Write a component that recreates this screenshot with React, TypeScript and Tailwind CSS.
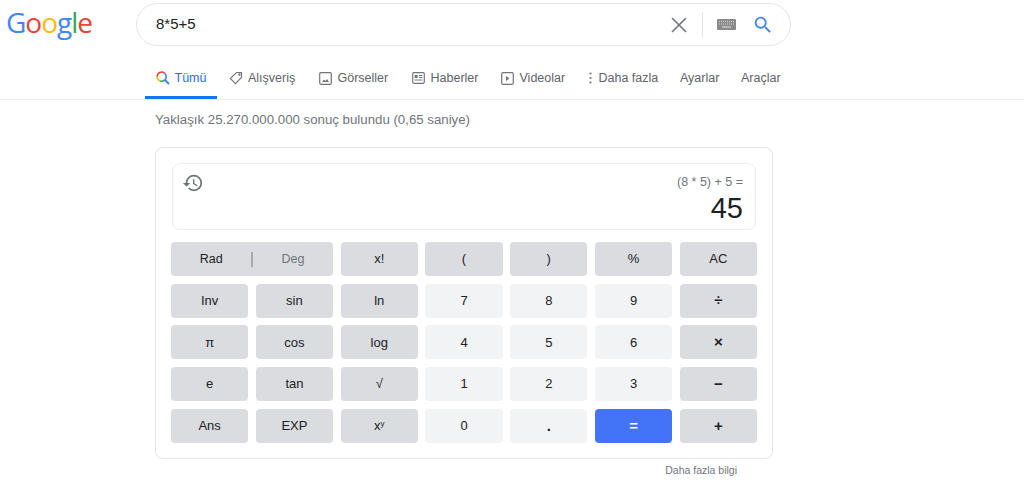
import { X } from "lucide-react";

const FONT = "font-['Liberation_Sans',Arial,sans-serif]";

const GoogleLogo = () => (
    <span className="flex text-[28px] font-medium leading-none tracking-[-1px] font-['Open_Sans',sans-serif]">
        <span className="text-[#4285f4]">G</span>
        <span className="text-[#ea4335]">o</span>
        <span className="text-[#fbbc05]">o</span>
        <span className="text-[#4285f4]">g</span>
        <span className="text-[#34a853]">l</span>
        <span className="text-[#ea4335]">e</span>
    </span>
);

const KeyboardIcon = () => (
    <svg width="19" height="11" viewBox="0 0 19 11">
        <rect width="19" height="11" rx="1" fill="#8a8a8a" />
        <path d="M2 2.5h15M2 5h15" stroke="#d8d8d8" strokeWidth="1" strokeDasharray="1 1" />
        <path d="M5 8h9" stroke="#d8d8d8" strokeWidth="1.2" />
    </svg>
);

const BlueSearch = () => (
    <svg width="22" height="22" viewBox="0 0 24 24" fill="#4285f4">
        <path d="M15.5 14h-.79l-.28-.27A6.471 6.471 0 0 0 16 9.5 6.5 6.5 0 1 0 9.5 16c1.61 0 3.09-.59 4.23-1.57l.27.28v.79l5 4.99L20.49 19l-4.99-5zm-6 0C7.01 14 5 11.99 5 9.5S7.01 5 9.5 5 14 7.01 14 9.5 11.99 14 9.5 14z" />
    </svg>
);

const HistoryIcon = () => (
    <svg width="22" height="22" viewBox="0 0 24 24" fill="#70757a">
        <path d="M13 3a9 9 0 0 0-9 9H1l3.89 3.89.07.14L9 12H6c0-3.87 3.13-7 7-7s7 3.13 7 7-3.13 7-7 7c-1.93 0-3.68-.79-4.94-2.06l-1.42 1.42A8.954 8.954 0 0 0 13 21a9 9 0 0 0 0-18zm-1 5v5l4.28 2.54.72-1.21-3.5-2.08V8H12z" />
    </svg>
);

const ColorSearch = () => (
    <svg width="14" height="14" viewBox="0 0 14 14" fill="none" strokeWidth="1.6">
        <path d="M8.5 2.1a4.5 4.5 0 0 0-7.3 3.6" stroke="#ea4335" />
        <path d="M1.2 5.7a4.5 4.5 0 0 0 3 4.2" stroke="#fbbc05" />
        <path d="M4.2 9.9a4.5 4.5 0 0 0 4.6-1" stroke="#34a853" />
        <path d="M8.5 2.1a4.5 4.5 0 0 1 .3 6.8" stroke="#4285f4" />
        <path d="M9 9l4 4" stroke="#4285f4" strokeWidth="1.9" />
    </svg>
);

const TagIcon = () => (
    <svg width="14" height="14" viewBox="0 0 14 14" fill="none" stroke="#70757a" strokeWidth="1.1">
        <path d="M7.5 1.5h5v5l-6 6.2-5.2-5.2z" />
        <circle cx="10.4" cy="3.6" r="0.7" />
    </svg>
);

const ImageIcon = () => (
    <svg width="13" height="13" viewBox="0 0 13 13" fill="none">
        <rect x="0.7" y="0.7" width="11.6" height="11.6" rx="1.2" stroke="#70757a" strokeWidth="1.2" />
        <path d="M3 10l2-2.6 1.5 1.6L8 7l2 3z" fill="#70757a" />
    </svg>
);

const NewsIcon = () => (
    <svg width="13" height="12" viewBox="0 0 13 12" fill="none">
        <rect x="0.7" y="0.7" width="11.6" height="10.6" rx="1.2" stroke="#70757a" strokeWidth="1.2" />
        <rect x="2.6" y="3" width="3" height="3" fill="#70757a" />
        <path d="M6.8 3.5h3.6M6.8 5.5h3.6M2.6 8h7.8" stroke="#70757a" />
    </svg>
);

const VideoIcon = () => (
    <svg width="13" height="13" viewBox="0 0 13 13" fill="none">
        <rect x="0.7" y="0.7" width="11.6" height="11.6" rx="1.2" stroke="#70757a" strokeWidth="1.2" />
        <path d="M5 4l3.4 2.5L5 9z" fill="#70757a" />
    </svg>
);

const DotsIcon = () => (
    <svg width="3" height="12" viewBox="0 0 3 12" fill="#70757a">
        <circle cx="1.5" cy="1.5" r="1.1" />
        <circle cx="1.5" cy="6" r="1.1" />
        <circle cx="1.5" cy="10.5" r="1.1" />
    </svg>
);

const tabs = [
    { label: "Alışveriş", icon: <TagIcon />, w: "w-[90px]", gap: "gap-[5px]" },
    { label: "Görseller", icon: <ImageIcon />, w: "w-[93px]", gap: "gap-[5.5px]" },
    { label: "Haberler", icon: <NewsIcon />, w: "w-[89px]", gap: "gap-[5.5px]" },
    { label: "Videolar", icon: <VideoIcon />, w: "w-[88px]", gap: "gap-[5.5px]" },
    { label: "Daha fazla", icon: <DotsIcon />, w: "w-[91px]", gap: "gap-[6.5px]" },
];

const Key = ({ label, kind = "fn" }: { label: React.ReactNode; kind?: "fn" | "num" | "eq" }) => {
    const colors = {
        fn: "bg-[#dadce0] text-[#202124]",
        num: "bg-[#f1f3f4] text-[#202124]",
        eq: "bg-[#4374f8] text-white",
    };
    return (
        <button className={`h-[34px] rounded text-[13px] flex items-center justify-center ${colors[kind]}`}>
            {label}
        </button>
    );
};

const Op = ({ children }: { children: React.ReactNode }) => <b className="text-[15px]">{children}</b>;

const App = () => {
    return (
        <div className={`w-[1024px] h-[490px] overflow-hidden bg-white ${FONT}`}>
            <header className="h-[100px] border-b border-[#ebebeb] flex flex-col">
                <div className="flex items-start pt-[3px] h-[56px]">
                    <div className="w-[136px] pl-[6px] pt-[5px]">
                        <GoogleLogo />
                    </div>
                    <div className="w-[655px] h-[43px] rounded-full border border-[#e4e4e4] flex items-center pl-[19px] pr-[16px]">
                        <span className="flex-1 text-[15px] text-[#202124]">8*5+5</span>
                        <X size={26} strokeWidth={1.5} className="text-[#70757a]" />
                        <div className="w-px h-[26px] bg-[#e6e6e6] ml-[10px] mr-[14px]" />
                        <KeyboardIcon />
                        <div className="ml-[16px]">
                            <BlueSearch />
                        </div>
                    </div>
                </div>
                <nav className="flex flex-1 items-stretch pl-[145px] text-[12.5px] text-[#5f6368]">
                    <div className="w-[72px] flex items-center justify-center gap-[5px] border-b-[3px] border-[#1a73e8] text-[#1a73e8] pt-[4px]">
                        <ColorSearch />
                        <span>Tümü</span>
                    </div>
                    <div className="w-[12px]" />
                    {tabs.map((tab) => (
                        <div key={tab.label} className={`${tab.w} ${tab.gap} shrink-0 flex items-center pt-px`}>
                            {tab.icon}
                            <span>{tab.label}</span>
                        </div>
                    ))}
                    <div className="w-[61px] flex items-center pt-px">Ayarlar</div>
                    <div className="flex items-center pt-px">Araçlar</div>
                </nav>
            </header>

            <main className="pl-[155px]">
                <p className="text-[13.25px] leading-[14px] text-[#70757a] pt-[13px] pb-[20px]">
                    Yaklaşık 25.270.000.000 sonuç bulundu (0,65 saniye)
                </p>
                <div className="w-[618px] h-[312px] rounded-lg border border-[#e4e4e4] pt-[15px] pl-[15px]">
                    <div className="w-[584px] h-[67px] rounded-lg border border-[#efefef] flex justify-between ml-px pl-[9px] pr-[12px] pt-[8px]">
                        <HistoryIcon />
                        <div className="text-right">
                            <div className="text-[12.5px] leading-[14px] text-[#70757a] mt-[3px]">(8 * 5) + 5 =</div>
                            <div className="text-[29px] leading-[32px] text-[#202124] mt-[3px]">45</div>
                        </div>
                    </div>
                    <div className="grid grid-cols-7 gap-x-[7.5px] gap-y-[7.7px] w-[586px] mt-[12px]">
                        <button className="col-span-2 h-[34px] rounded bg-[#dadce0] text-[12.5px] flex items-center">
                            <span className="flex-1 text-center text-[#202124]">Rad</span>
                            <span className="w-[1.5px] h-[15px] bg-[#a6a8ab]" />
                            <span className="flex-1 text-center text-[#70757a]">Deg</span>
                        </button>
                        <Key label="x!" />
                        <Key label="(" />
                        <Key label=")" />
                        <Key label="%" />
                        <Key label="AC" />

                        <Key label="Inv" />
                        <Key label="sin" />
                        <Key label="ln" />
                        <Key label="7" kind="num" />
                        <Key label="8" kind="num" />
                        <Key label="9" kind="num" />
                        <Key label={<Op>÷</Op>} />

                        <Key label="π" />
                        <Key label="cos" />
                        <Key label="log" />
                        <Key label="4" kind="num" />
                        <Key label="5" kind="num" />
                        <Key label="6" kind="num" />
                        <Key label={<Op>×</Op>} />

                        <Key label="e" />
                        <Key label="tan" />
                        <Key label="√" />
                        <Key label="1" kind="num" />
                        <Key label="2" kind="num" />
                        <Key label="3" kind="num" />
                        <Key label={<Op>−</Op>} />

                        <Key label="Ans" />
                        <Key label="EXP" />
                        <Key label={<span>x<sup className="text-[8px]">y</sup></span>} />
                        <Key label="0" kind="num" />
                        <Key label={<Op>.</Op>} kind="num" />
                        <Key label={<Op>=</Op>} kind="eq" />
                        <Key label={<Op>+</Op>} />
                    </div>
                </div>
                <div className="w-[582px] text-right text-[10.5px] leading-[12px] text-[#70757a] mt-[5px]">Daha fazla bilgi</div>
            </main>
        </div>
    );
};

export default App;
